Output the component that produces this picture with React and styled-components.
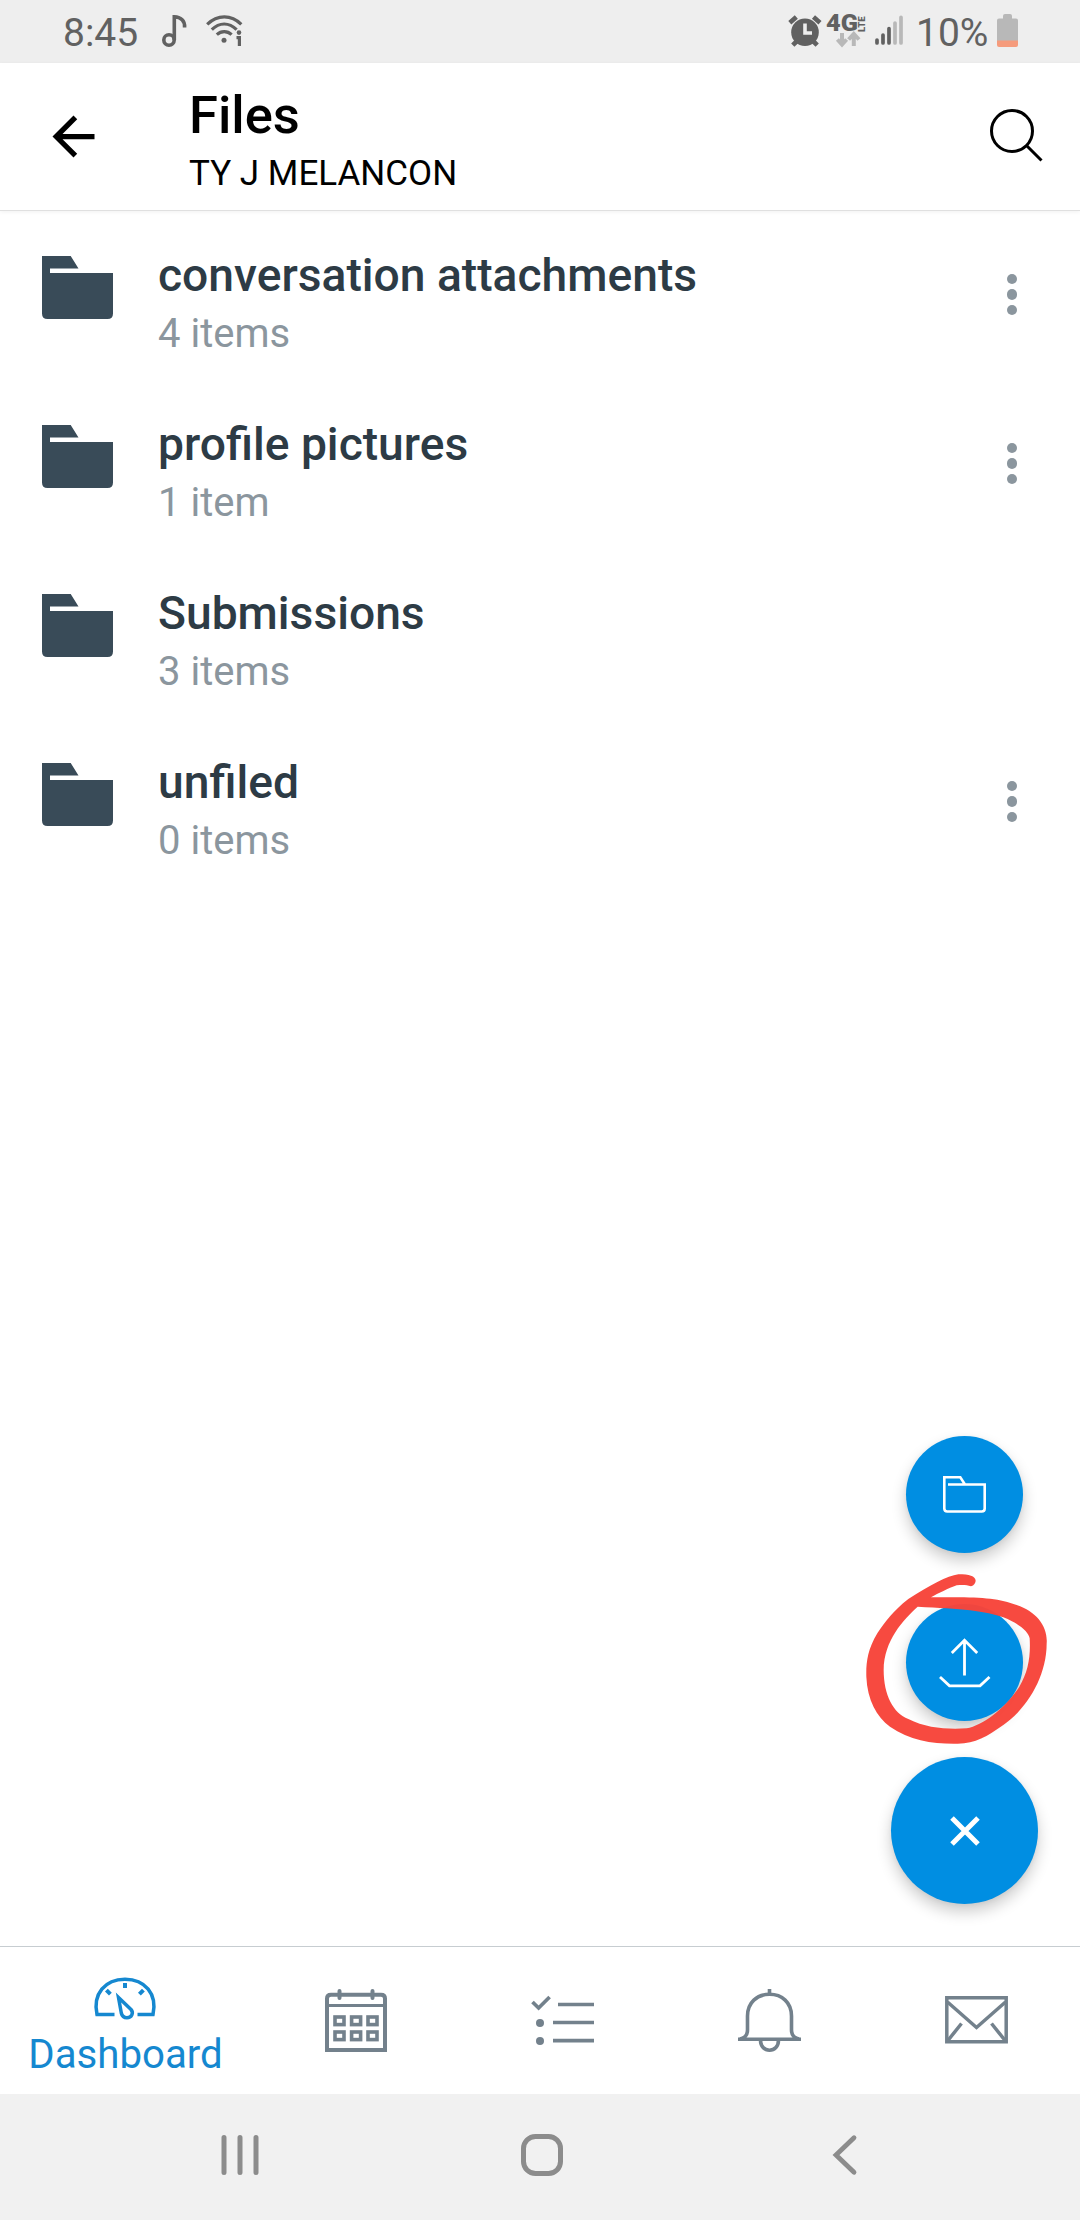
import React from "react";
import styled, { createGlobalStyle } from "styled-components";

const GlobalStyle = createGlobalStyle`
  * { box-sizing: border-box; }
  body { margin: 0; background: #fff; font-family: Roboto, sans-serif; }
  button { border: 0; padding: 0; background: none; font: inherit; color: inherit; }
  svg { display: block; flex: none; overflow: visible; }
`;

const Screen = styled.div`
  position: relative;
  display: flex;
  flex-direction: column;
  width: 1080px;
  height: 2220px;
  background: #fff;
  overflow: hidden;
`;

const StatusBar = styled.div`
  display: flex;
  justify-content: space-between;
  height: 63px;
  flex: none;
  padding: 0 62px 0 63px;
  background: #eee;
  color: #616161;
`;

const StatusGroup = styled.div`
  display: flex;
  align-items: flex-start;
`;

const StatusText = styled.span`
  font-size: 39px;
  line-height: 66px;
  white-space: nowrap;
  width: ${(p) => p.$width}px;
`;

const StatusIcon = styled.div`
  margin: ${(p) => p.$top}px 0 0 ${(p) => p.$left}px;
`;

const Network = styled.div`
  display: grid;
  grid-template-columns: 32px 8px;
  grid-template-rows: 17px 16px;
  width: 40px;
  margin: 15px 0 0 4px;
`;

const NetworkName = styled.span`
  font-size: 23px;
  font-weight: 900;
  line-height: 17px;
  transform: scaleX(1.1);
  transform-origin: left;
`;

const NetworkSub = styled.span`
  writing-mode: vertical-rl;
  transform: rotate(180deg);
  font-size: 9.5px;
  font-weight: 900;
  line-height: 8px;
  height: 17px;
`;

const DataActivity = styled.div`
  padding-left: 10px;
`;

const Header = styled.header`
  display: flex;
  align-items: flex-start;
  height: 148px;
  flex: none;
  padding: 0 37px 0 42px;
  border-bottom: 1px solid #e0e0e0;
  box-shadow: 0 1px 4px rgba(0, 0, 0, 0.06);
  color: #000;
`;

const BackButton = styled.button`
  margin-top: 42px;
`;

const Heading = styled.div`
  flex: 1;
  padding: 22px 0 0 84px;
`;

const Title = styled.h1`
  margin: 0;
  font-size: 52.5px;
  font-weight: 500;
  line-height: 60px;
`;

const Subtitle = styled.div`
  margin-top: 9px;
  font-size: 35px;
  line-height: 40px;
`;

const SearchButton = styled.button`
  margin-top: 45px;
`;

const FileList = styled.main`
  flex: 1;
`;

const FileRow = styled.div`
  display: flex;
  align-items: flex-start;
  height: 169px;
  padding: 0 63px 0 42px;
`;

const FolderIcon = styled.div`
  margin-top: 45px;
`;

const FileText = styled.div`
  flex: 1;
  padding: 36px 0 0 45px;
`;

const FileName = styled.div`
  font-size: 46.2px;
  font-weight: 500;
  line-height: 56px;
  color: #2d3b45;
`;

const FileCount = styled.div`
  margin-top: 6px;
  font-size: 40px;
  line-height: 50px;
  color: #8b969e;
`;

const MoreButton = styled.button`
  display: flex;
  flex-direction: column;
  gap: 5px;
  margin-top: 63px;
`;

const Dot = styled.span`
  width: 10.4px;
  height: 10.4px;
  border-radius: 50%;
  background: #8b969e;
`;

const FabStack = styled.div`
  position: absolute;
  top: 1436px;
  right: 42px;
  display: flex;
  flex-direction: column;
  align-items: center;
`;

const Fab = styled.button`
  display: flex;
  align-items: center;
  justify-content: center;
  width: ${(p) => p.$size}px;
  height: ${(p) => p.$size}px;
  margin-bottom: ${(p) => p.$gap || 0}px;
  border-radius: 50%;
  background: #008ee2;
  box-shadow: 0 8px 15px rgba(0, 0, 0, 0.2), 0 1px 5px rgba(0, 0, 0, 0.05);
`;

const Marker = styled.div`
  position: absolute;
  left: 860px;
  top: 1570px;
  pointer-events: none;
`;

const TabBar = styled.nav`
  display: flex;
  flex: none;
  height: 148px;
  border-top: 1px solid #c7cdd1;
  background: #fff;
`;

const Tab = styled.div`
  display: flex;
  flex-direction: column;
  align-items: center;
  width: ${(p) => (p.$active ? 251 : 207)}px;
  margin-right: ${(p) => (p.$active ? 1 : 0)}px;
  padding-top: ${(p) => (p.$active ? 30 : 42)}px;
  color: ${(p) => (p.$active ? "#1588d0" : "#73818c")};
`;

const TabLabel = styled.span`
  margin-top: 12px;
  font-size: 40.2px;
  line-height: 46px;
`;

const SystemNav = styled.div`
  display: flex;
  flex: none;
  align-items: center;
  justify-content: space-between;
  height: 126px;
  padding: 0 221px 5px;
  background: #f1f1f1;
  color: #8c8c8c;
`;

const HomeButton = styled.button`
  margin-right: 6px;
`;

const Folder = () => (
  <svg width="71" height="63" viewBox="0 0 71 63" fill="#394b58">
    <path d="M0 0H28.7L36.5 12.6H8V17H71V57.5Q71 63 65.5 63H5.5Q0 63 0 57.5Z" />
  </svg>
);

const files = [
  { name: "conversation attachments", count: "4 items", menu: true },
  { name: "profile pictures", count: "1 item", menu: true },
  { name: "Submissions", count: "3 items", menu: false },
  { name: "unfiled", count: "0 items", menu: true },
];

const Note = () => (
  <svg width="25" height="32" viewBox="0 0 25 32" fill="none" stroke="#616161">
    <circle cx="7" cy="25" r="5.2" strokeWidth="3.6" />
    <path d="M12.3 25V1.8C18.5 2.2 23 5.5 22.6 12.5" strokeWidth="3.6" />
  </svg>
);

const Wifi = () => (
  <svg width="37" height="32" viewBox="0 0 37 32" fill="none" stroke="#616161" strokeWidth="3.2">
    <path d="M1.2 9.4C11.5-.6 25.2-.6 35.3 9.4M5.8 14.6C13.4 7.1 23 7.1 30.6 14.6M10.8 19.6C15.2 15.6 21.3 15.6 25.6 19.6" />
    <circle cx="18" cy="25.3" r="2.5" fill="#616161" stroke="none" />
    <circle cx="33" cy="17.6" r="2.3" fill="#616161" stroke="none" />
    <path d="M30.5 22.6H33.4V31" />
  </svg>
);

const Alarm = () => (
  <svg width="34" height="32" viewBox="0 0 34 32">
    <g stroke="#616161" strokeWidth="4.6" fill="none">
      <path d="M1.8 7.8L8.3 2M32 7.8L25.5 2" />
      <path d="M9 26L4.8 30.2M25 26L29.2 30.2" />
    </g>
    <circle cx="17" cy="17.3" r="13.8" fill="#616161" />
    <path d="M17 8.5V18H24" fill="none" stroke="#eee" strokeWidth="3.6" />
  </svg>
);

const DataArrows = () => (
  <svg width="24" height="16" viewBox="0 0 24 16" fill="none" stroke="#b8b8b8" strokeWidth="4">
    <path d="M6 1V12M1.4 7.5L6 12.5L10.6 7.5M17.8 14V3M12.6 7.5L17.8 2L23 7.5" />
  </svg>
);

const Signal = () => (
  <svg width="28" height="31" viewBox="0 0 28 31" strokeWidth="3.7" strokeLinecap="round">
    <path d="M2 25V28M8 20V28M14 13.5V28" stroke="#616161" />
    <path d="M20 8V28M26 2.3V28" stroke="#b8b8b8" />
  </svg>
);

const Battery = () => (
  <svg width="21" height="33" viewBox="0 0 21 33">
    <path d="M6 2Q6 0 8 0H13Q15 0 15 2V4.5H19Q21 4.5 21 6.5V27H0V6.5Q0 4.5 2 4.5H6Z" fill="#b8b8b8" />
    <path d="M0 26.5H21V31Q21 33 19 33H2Q0 33 0 31Z" fill="#f59b7c" />
  </svg>
);

const Gauge = () => (
  <svg width="64" height="43" viewBox="0 0 64 43" fill="none" stroke="currentColor" strokeWidth="3.5">
    <path d="M20.5 37.5H3C-1.5 17 11 2.2 31 2.2S63.5 17 59 37.5H43.5" />
    <path d="M31 6V11M12.4 13.2L16.4 17.2M49.4 13.2L45.4 17.2" strokeWidth="4" />
    <path d="M24.5 20.5L37 32.5C40 36 37.5 40.7 33 40.7C29.8 40.7 28 39 27.3 36Z" />
  </svg>
);

const Calendar = () => (
  <svg width="62" height="63" viewBox="0 0 62 63" fill="none" stroke="currentColor">
    <path d="M2 61V9.5Q2 5.7 6 5.7H56Q60 5.7 60 9.5V61Z" strokeWidth="4" />
    <path d="M2 16.5H60" strokeWidth="3.2" />
    <path d="M14.5 2V9M47.5 2V9" strokeWidth="4" strokeLinecap="round" />
    {[10, 26.6, 43].map((x) =>
      [28, 43].map((y) => <rect key={`${x}-${y}`} x={x} y={y} width="9" height="7.6" strokeWidth="3.6" />)
    )}
  </svg>
);

const Checklist = () => (
  <svg width="63" height="63" viewBox="0 0 63 63" fill="none" stroke="currentColor" strokeWidth="3.7">
    <path d="M1.5 13L7.6 19L18.6 8M27 15.5H63M22 33.5H63M22 51.7H63" />
    <circle cx="9" cy="34" r="4" fill="currentColor" stroke="none" />
    <circle cx="9" cy="52" r="4" fill="currentColor" stroke="none" />
  </svg>
);

const Bell = () => (
  <svg width="63" height="63" viewBox="0 0 63 63" fill="none" stroke="currentColor" strokeWidth="3.6">
    <path d="M31.5 0V5M0 50.2H63" />
    <path d="M2 50Q9.5 48.5 9.5 41V27C9.5 13.5 19 5.3 31.5 5.3S53.5 13.5 53.5 27V41Q53.5 48.5 61 50" />
    <path d="M22.5 51C22.5 57.5 26.5 61.2 31.5 61.2S40.5 57.5 40.5 51" />
  </svg>
);

const Mail = () => (
  <svg width="63" height="63" viewBox="0 0 63 63" fill="none" stroke="currentColor" strokeWidth="3.5">
    <path d="M1.8 8.8H61.2V52.7H1.8Z" />
    <path d="M2.5 13L31.5 38.5L60.5 13M2.5 52L16.5 34.5M60.5 52L46.5 34.5" />
  </svg>
);

const App = () => (
  <>
    <GlobalStyle />
    <Screen>
      <StatusBar>
        <StatusGroup>
          <StatusText $width={99}>8:45</StatusText>
          <StatusIcon $top={15} $left={0}><Note /></StatusIcon>
          <StatusIcon $top={15} $left={19}><Wifi /></StatusIcon>
        </StatusGroup>
        <StatusGroup>
          <StatusIcon $top={15} $left={0}><Alarm /></StatusIcon>
          <Network>
            <NetworkName>4G</NetworkName>
            <NetworkSub>LTE</NetworkSub>
            <DataActivity><DataArrows /></DataActivity>
          </Network>
          <StatusIcon $top={15} $left={9}><Signal /></StatusIcon>
          <StatusIcon $top={0} $left={13}><StatusText as="div" $width={77}>10%</StatusText></StatusIcon>
          <StatusIcon $top={14} $left={4}><Battery /></StatusIcon>
        </StatusGroup>
      </StatusBar>

      <Header>
        <BackButton aria-label="Back">
          <svg width="63" height="63" viewBox="0 0 24 24">
            <path d="M20 11H7.83l5.59-5.59L12 4l-8 8 8 8 1.41-1.41L7.83 13H20v-2z" />
          </svg>
        </BackButton>
        <Heading>
          <Title>Files</Title>
          <Subtitle>TY J MELANCON</Subtitle>
        </Heading>
        <SearchButton aria-label="Search">
          <svg width="53" height="54" viewBox="0 0 53 54" fill="none" stroke="#000" strokeWidth="3">
            <circle cx="22" cy="23" r="20.5" />
            <path d="M36.5 37.5L51.5 52.5" />
          </svg>
        </SearchButton>
      </Header>

      <FileList>
        {files.map((file) => (
          <FileRow key={file.name}>
            <FolderIcon><Folder /></FolderIcon>
            <FileText>
              <FileName>{file.name}</FileName>
              <FileCount>{file.count}</FileCount>
            </FileText>
            {file.menu && (
              <MoreButton aria-label="More"><Dot /><Dot /><Dot /></MoreButton>
            )}
          </FileRow>
        ))}
      </FileList>

      <TabBar>
        <Tab $active>
          <Gauge />
          <TabLabel>Dashboard</TabLabel>
        </Tab>
        <Tab><Calendar /></Tab>
        <Tab><Checklist /></Tab>
        <Tab><Bell /></Tab>
        <Tab><Mail /></Tab>
      </TabBar>

      <SystemNav>
        <svg width="38" height="40" viewBox="0 0 38 40" stroke="currentColor" strokeWidth="5" strokeLinecap="round">
          <path d="M3 2.5V37.5M19 2.5V37.5M35 2.5V37.5" />
        </svg>
        <HomeButton aria-label="Home">
          <svg width="42" height="42" viewBox="0 0 42 42" fill="none" stroke="currentColor" strokeWidth="5">
            <rect x="2.5" y="2.5" width="37" height="37" rx="12" />
          </svg>
        </HomeButton>
        <svg width="28" height="40" viewBox="0 0 28 40" fill="none" stroke="currentColor" strokeWidth="4.8" strokeLinecap="round">
          <path d="M23 2.7L5 20L23 37.3" />
        </svg>
      </SystemNav>

      <FabStack>
        <Fab $size={117} $gap={51} aria-label="New folder">
          <svg width="43" height="37" viewBox="0 0 43 37" fill="none" stroke="#fff" strokeWidth="2.6">
            <path d="M5 8.5H41.7V32.5Q41.7 35.5 38.7 35.5H4.3Q1.3 35.5 1.3 32.5V1.3H17.3L22 8.5" />
          </svg>
        </Fab>
        <Fab $size={117} $gap={36} aria-label="Upload file">
          <svg width="51" height="50" viewBox="0 0 51 50" fill="none" stroke="#fff" strokeWidth="2.8">
            <path d="M25.5 37.5V2M12.8 15L25.5 2.3L38.2 15M1 39L10.5 47.8H41L50.5 39" />
          </svg>
        </Fab>
        <Fab $size={147} aria-label="Close">
          <svg width="30" height="30" viewBox="0 0 30 30" stroke="#fff" strokeWidth="5">
            <path d="M2 2L28 28M28 2L2 28" />
          </svg>
        </Fab>
      </FabStack>

      <Marker>
        <svg width="195" height="180" viewBox="0 0 585 540" fill="#f7443a" fillRule="evenodd">
          <path
            fillOpacity="0.97"
            d="M347 32C346 18 328 13 295 13C262 18 210 45 145 87C100 122 75 155 52 190C22 240 18 280 19 320C22 390 50 440 90 470C150 512 220 522 290 521C345 522 380 500 430 465C490 425 560 330 560 220C564 170 530 125 470 105C410 82 350 80 213 82C235 70 265 55 290 46C310 44 320 45 333 49C342 46 347 38 347 32Z
               M173 110C130 150 72 210 71 300C71 375 100 430 145 447C200 475 260 478 320 475C370 465 435 415 478 350C505 305 512 260 509 205C505 185 480 162 430 142C380 122 300 116 173 110Z"
          />
        </svg>
      </Marker>
    </Screen>
  </>
);

export default App;
